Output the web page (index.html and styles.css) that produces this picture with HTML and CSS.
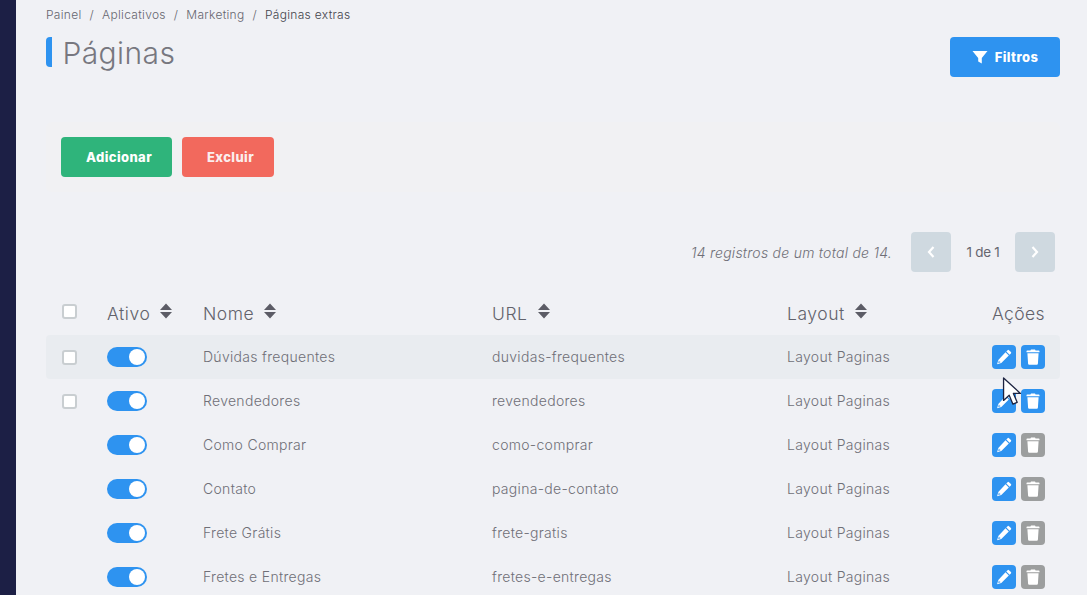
FILE: index.html
```html
<!DOCTYPE html>
<html lang="pt-BR">
<head>
<meta charset="utf-8">
<title>Páginas</title>
<link rel="stylesheet" href="styles.css">
</head>
<body>
<svg class="defs" width="0" height="0" aria-hidden="true">
  <symbol id="pencil" viewBox="0 0 16 16"><path fill="#fff" d="M11.600 1.200a1 1 0 0 1 1.400 0l1.900 1.900a1 1 0 0 1 0 1.400l-1.300 1.300-3.300-3.300zM9.500 3.300l3.300 3.300-7.500 7.500-4.200 1.200 1.200-4.300zM2.900 11.500l-.7 2.400 2.300-.6-.5-.7-.8.1.1-.8z"/></symbol>
  <symbol id="trash" viewBox="0 0 16 16"><path fill="#fff" d="M6 .6h4l.6 1h3.200a.7.7 0 0 1 .7.700v.9h-13v-.9a.7.7 0 0 1 .7-.7h3.200zM2.400 4.200h11.200l-.7 10.500a1.100 1.100 0 0 1-1.100 1H4.200a1.100 1.100 0 0 1-1.100-1z"/></symbol>
  <symbol id="sort" viewBox="0 0 12 16"><path fill="#5c5c66" d="M6 .5 12 7H0zM0 9h12l-6 6.500z"/></symbol>
</svg>
<div class="app">
  <aside class="sidebar"></aside>
  <main class="content">
    <nav class="crumbs">
      <span>Painel</span><i>/</i><span>Aplicativos</span><i>/</i><span>Marketing</span><i>/</i><span class="current">Páginas extras</span>
    </nav>
    <header class="title-row">
      <h1 class="title">Páginas</h1>
      <button class="btn btn-blue">
        <svg class="funnel" viewBox="0 0 16 16"><path fill="#fff" d="M.5 2h15L9.800 9v5.500L6.200 12.500V9z"/></svg>
        Filtros
      </button>
    </header>
    <section class="actions-panel">
      <button class="btn btn-green">Adicionar</button>
      <button class="btn btn-red">Excluir</button>
    </section>
    <section class="pager">
      <em class="count">14 registros de um total de 14.</em>
      <button class="page-btn"><svg viewBox="0 0 10 14"><path d="M7.500 2 3 7l4.500 5" fill="none" stroke="#fff" stroke-width="2.200"/></svg></button>
      <span class="page-info">1 de 1</span>
      <button class="page-btn"><svg viewBox="0 0 10 14"><path d="M2.500 2 7 7l-4.500 5" fill="none" stroke="#fff" stroke-width="2.200"/></svg></button>
    </section>
    <section class="table">
      <div class="row head">
        <span class="cell-check"><span class="check"></span></span>
        <span class="th">Ativo <svg class="sort"><use href="#sort"/></svg></span>
        <span class="th">Nome <svg class="sort"><use href="#sort"/></svg></span>
        <span class="th">URL <svg class="sort"><use href="#sort"/></svg></span>
        <span class="th">Layout <svg class="sort"><use href="#sort"/></svg></span>
        <span class="th th-actions">Ações</span>
      </div>
      <div class="row hover">
        <span class="cell-check"><span class="check"></span></span>
        <span><span class="toggle"></span></span>
        <span class="txt">Dúvidas frequentes</span><span class="txt">duvidas-frequentes</span><span class="txt">Layout Paginas</span>
        <span class="ops"><b class="op"><svg><use href="#pencil"/></svg></b><b class="op"><svg><use href="#trash"/></svg></b></span>
      </div>
      <div class="row">
        <span class="cell-check"><span class="check"></span></span>
        <span><span class="toggle"></span></span>
        <span class="txt">Revendedores</span><span class="txt">revendedores</span><span class="txt">Layout Paginas</span>
        <span class="ops"><b class="op"><svg><use href="#pencil"/></svg></b><b class="op"><svg><use href="#trash"/></svg></b></span>
      </div>
      <div class="row">
        <span class="cell-check"></span>
        <span><span class="toggle"></span></span>
        <span class="txt">Como Comprar</span><span class="txt">como-comprar</span><span class="txt">Layout Paginas</span>
        <span class="ops"><b class="op"><svg><use href="#pencil"/></svg></b><b class="op off"><svg><use href="#trash"/></svg></b></span>
      </div>
      <div class="row">
        <span class="cell-check"></span>
        <span><span class="toggle"></span></span>
        <span class="txt">Contato</span><span class="txt">pagina-de-contato</span><span class="txt">Layout Paginas</span>
        <span class="ops"><b class="op"><svg><use href="#pencil"/></svg></b><b class="op off"><svg><use href="#trash"/></svg></b></span>
      </div>
      <div class="row">
        <span class="cell-check"></span>
        <span><span class="toggle"></span></span>
        <span class="txt">Frete Grátis</span><span class="txt">frete-gratis</span><span class="txt">Layout Paginas</span>
        <span class="ops"><b class="op"><svg><use href="#pencil"/></svg></b><b class="op off"><svg><use href="#trash"/></svg></b></span>
      </div>
      <div class="row">
        <span class="cell-check"></span>
        <span><span class="toggle"></span></span>
        <span class="txt">Fretes e Entregas</span><span class="txt">fretes-e-entregas</span><span class="txt">Layout Paginas</span>
        <span class="ops"><b class="op"><svg><use href="#pencil"/></svg></b><b class="op off"><svg><use href="#trash"/></svg></b></span>
      </div>
    </section>
  </main>
</div>
<svg class="cursor" viewBox="0 0 20 32"><path d="M1 1v24l6-5.500 4 9.500 4.500-2-4-9.500H19z" fill="#fff" stroke="#1c2340" stroke-width="1.400" stroke-linejoin="round"/></svg>
</body>
</html>
```
FILE: styles.css
```css
* { box-sizing: border-box; }
html, body { height: 100%; }
body {
  margin: 0;
  overflow: hidden;
  background: #f0f1f5;
  font-family: "Inter", "Liberation Sans", sans-serif;
  font-weight: 300;
  color: #77777f;
}
.defs { position: absolute; }
.app { display: flex; height: 100%; }
.sidebar { width: 16px; flex: none; background: #1c1f45; }
.content { flex: 1; padding: 0 27px 0 30px; min-width: 0; }

.crumbs {
  display: flex;
  align-items: center;
  height: 15px;
  margin-top: 7px;
  font-size: 12px;
  letter-spacing: .3px;
  color: #66666f;
}
.crumbs i { font-style: normal; margin: 0 8px; }
.crumbs .current { color: #44444c; }

.title-row {
  display: flex;
  justify-content: space-between;
  align-items: flex-start;
  margin-top: 15px;
}
.title {
  margin: 0;
  height: 30px;
  padding-left: 10.500px;
  border-left: 6px solid #2e93f0;
  border-radius: 4px;
  font-size: 30px;
  line-height: 32px;
  font-weight: 300;
  letter-spacing: .4px;
  color: #77777f;
}

.btn {
  height: 40px;
  padding: 0;
  border: 0;
  border-radius: 4px;
  color: #fff;
  font: 800 13px "Inter", "Liberation Sans", sans-serif;
  letter-spacing: .4px;
}
.btn-blue {
  width: 110px;
  background: #2e93f0;
  display: flex;
  align-items: center;
  justify-content: center;
  gap: 7px;
}
.funnel { width: 16px; height: 16px; }
.btn-green { width: 111px; padding-left: 5px; background: #2fb47b; }
.btn-red { width: 92px; padding-left: 5px; background: #f2695d; color: #fbeeee; }

.actions-panel {
  display: flex;
  gap: 10px;
  height: 70px;
  margin-top: 45px;
  padding: 15px;
  background: #f1f1f3;
  border-radius: 6px;
}

.pager {
  display: flex;
  align-items: center;
  justify-content: flex-end;
  height: 40px;
  margin-top: 40px;
  padding-right: 5px;
}
.count { font-size: 14px; letter-spacing: .25px; color: #6f6f77; margin-right: 19px; }
.page-btn {
  width: 40px;
  height: 40px;
  padding: 0;
  border: 0;
  border-radius: 4px;
  background: #cfd9e0;
  display: flex;
  align-items: center;
  justify-content: center;
}
.page-btn svg { width: 10px; height: 14px; }
.page-info { width: 64px; text-align: center; font-size: 13.500px; font-weight: 400; letter-spacing: -.3px; color: #66666f; }

.table { margin-top: 19px; }
.row {
  display: grid;
  grid-template-columns: 61px 96px 289px 295px 1fr 68px;
  align-items: center;
  height: 44px;
  font-size: 14px;
  letter-spacing: .3px;
  color: #6f6f77;
  border-radius: 4px;
}
.txt { margin-top: -2px; }
.row.hover { background: #e9ecf0; }
.row.head { height: 44px; font-size: 17.500px; letter-spacing: .55px; color: #62626b; }
.cell-check { display: flex; padding-left: 15.500px; }
.check {
  width: 15px;
  height: 15px;
  background: #fff;
  border: 2px solid #c9ced1;
  border-radius: 3px;
}
.head .check { position: relative; top: -2px; }
.th { display: flex; align-items: center; gap: 10px; }
.row.head .th-actions { justify-content: flex-end; padding-right: 15px; margin-left: -30px; letter-spacing: .4px; }
.sort { width: 12px; height: 16px; position: relative; top: -2px; }
.toggle {
  display: block;
  position: relative;
  width: 40px;
  height: 20px;
  border-radius: 10px;
  background: #2e93f0;
}
.toggle::after {
  content: "";
  position: absolute;
  top: 2px;
  right: 2px;
  width: 16px;
  height: 16px;
  border-radius: 50%;
  background: #fff;
}
.ops { display: flex; justify-content: flex-end; gap: 5px; padding-right: 15px; margin-left: -30px; }
.op {
  display: flex;
  align-items: center;
  justify-content: center;
  width: 24px;
  height: 24px;
  border-radius: 4px;
  background: #2e93f0;
}
.op.off { background: #9c9e9e; }
.op svg { width: 16px; height: 16px; }

.cursor {
  position: absolute;
  left: 1002px;
  top: 377px;
  width: 20px;
  height: 30px;
}
```
